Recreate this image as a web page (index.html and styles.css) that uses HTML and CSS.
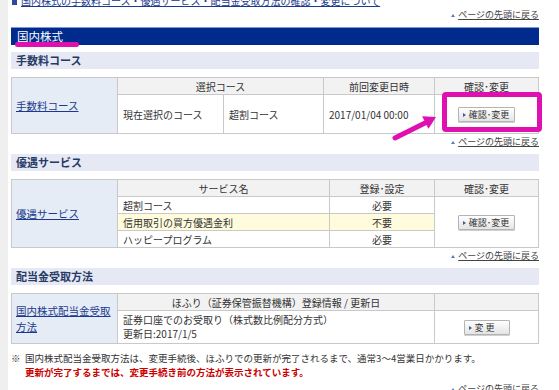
FILE: index.html
```html
<!DOCTYPE html>
<html>
  <head>
    <meta charset="utf-8">
    <link rel="stylesheet" href="styles.css">
  </head>
  <body>
    <main class="wrap">
      <div class="page">
        <p class="cut-link"><span class="sq"></span><a href="#">国内株式の手数料コース・優遇サービス・配当金受取方法の確認・変更について</a></p>
        <p class="pagetop"><a href="#"><span class="up"></span>ページの先頭に戻る</a></p>

        <h2 class="bar">国内株式</h2>

        <h3 class="sub">手数料コース</h3>
        <table class="grid">
          <colgroup>
            <col style="width:106px"><col style="width:106px"><col style="width:100px"><col style="width:111px"><col>
          </colgroup>
          <tr class="head">
            <td class="side" rowspan="2"><a href="#">手数料コース</a></td>
            <th colspan="2">選択コース</th>
            <th>前回変更日時</th>
            <th>確認･変更</th>
          </tr>
          <tr class="tall">
            <td>現在選択のコース</td>
            <td>超割コース</td>
            <td>2017/01/04 00:00</td>
            <td class="act"><button class="btn"><span class="tri"></span>確認･変更</button></td>
          </tr>
        </table>
        <p class="pagetop after"><a href="#"><span class="up"></span>ページの先頭に戻る</a></p>

        <h3 class="sub">優遇サービス</h3>
        <table class="grid">
          <colgroup>
            <col style="width:106px"><col style="width:212px"><col style="width:105px"><col>
          </colgroup>
          <tr class="head">
            <td class="side" rowspan="4"><a href="#">優遇サービス</a></td>
            <th>サービス名</th>
            <th>登録･設定</th>
            <th>確認･変更</th>
          </tr>
          <tr>
            <td>超割コース</td>
            <td class="c">必要</td>
            <td class="act" rowspan="3"><button class="btn"><span class="tri"></span>確認･変更</button></td>
          </tr>
          <tr class="hl">
            <td>信用取引の買方優遇金利</td>
            <td class="c">不要</td>
          </tr>
          <tr>
            <td>ハッピープログラム</td>
            <td class="c">必要</td>
          </tr>
        </table>
        <p class="pagetop after"><a href="#"><span class="up"></span>ページの先頭に戻る</a></p>

        <h3 class="sub">配当金受取方法</h3>
        <table class="grid">
          <colgroup>
            <col style="width:106px"><col style="width:317px"><col>
          </colgroup>
          <tr class="head">
            <td class="side" rowspan="2"><a href="#">国内株式配当金受取方法</a></td>
            <th>ほふり（証券保管振替機構）登録情報 / 更新日</th>
            <th></th>
          </tr>
          <tr class="mid">
            <td>証券口座でのお受取り（株式数比例配分方式）<br>更新日:2017/1/5</td>
            <td class="act"><button class="btn wide"><span class="tri"></span>変 更</button></td>
          </tr>
        </table>

        <p class="note"><span class="mark">※</span>国内株式配当金受取方法は、変更手続後、ほふりでの更新が完了されるまで、通常3～4営業日かかります。</p>
        <p class="warn">更新が完了するまでは、変更手続き前の方法が表示されています。</p>
        <p class="pagetop last"><a href="#"><span class="up"></span>ページの先頭に戻る</a></p>
      </div>

      <!-- annotations drawn over the page -->
      <span class="mark-line"></span>
      <span class="mark-box"></span>
      <svg class="mark-arrow" width="52" height="34" viewBox="0 0 52 34">
        <line x1="7" y1="28" x2="37" y2="13" stroke="#e010b0" stroke-width="5" stroke-linecap="round"/>
        <polygon points="48,7 40.5,18.7 34.1,6.3" fill="#e010b0"/>
      </svg>
    </main>
  </body>
</html>
```

FILE: styles.css
```css
* {
  margin: 0;
  padding: 0;
  box-sizing: border-box;
}

html, body {
  height: 100%;
  overflow: hidden;
}

body {
  font-family: "Noto Sans CJK JP", "Liberation Sans", sans-serif;
  font-size: 10px;
  color: #333;
  background: #fff;
}

a {
  color: #1c3a8c;
}

.wrap {
  position: relative;
  min-height: 100%;
  border-left: 8px solid #efefef;
  padding-left: 3px;
}

.page {
  width: 528px;
}

.cut-link {
  height: 8px;
  line-height: 0;
  font-size: 10px;
  padding-left: 1px;
  white-space: nowrap;
}

.cut-link .sq {
  display: inline-block;
  width: 5px;
  height: 5px;
  background: #2b4c9a;
  margin-right: 4px;
  vertical-align: middle;
}

.cut-link a {
  color: #1c3a8c;
}

.pagetop {
  margin-top: 2px;
  height: 10px;
  line-height: 10px;
  font-size: 9px;
  text-align: right;
}

.pagetop a {
  color: #444;
}

.pagetop .up {
  display: inline-block;
  width: 0;
  height: 0;
  border-left: 2px solid transparent;
  border-right: 2px solid transparent;
  border-bottom: 3px solid #4d7fc4;
  margin-right: 3px;
  vertical-align: 1px;
}

.pagetop.after {
  margin-top: 3px;
}

.pagetop.last {
  margin-top: 5px;
}

.bar {
  margin-top: 7px;
  height: 18px;
  line-height: 16px;
  background: #002b8c;
  border-top: 1px solid #7d98d4;
  color: #fff;
  font-size: 11.5px;
  font-weight: normal;
  padding-left: 6px;
}

.sub {
  margin-top: 7px;
  height: 17px;
  line-height: 17px;
  background: #e6e9f3;
  color: #263a66;
  font-size: 11px;
  font-weight: bold;
  padding-left: 5px;
}

.sub + .grid {
  margin-top: 8px;
}

.grid {
  width: 528px;
  border-collapse: collapse;
  table-layout: fixed;
}

.grid th,
.grid td {
  border: 1px solid #c9c9c9;
  height: 17px;
  padding: 0 5px;
  font-weight: normal;
  vertical-align: middle;
  white-space: nowrap;
}

.grid .head th {
  background: #f2f2f2;
  text-align: center;
}

.grid td.side {
  background: #e5ecf6;
  padding-left: 4px;
  white-space: normal;
  font-size: 10.5px;
  line-height: 16px;
}

.grid .tall td {
  height: 39px;
}

.grid .mid td {
  height: 33px;
  line-height: 14px;
}

.grid .hl td {
  background: #fffbdd;
}

.grid .hl td.act,
.grid td.act {
  background: #fff;
  text-align: center;
}

.grid td.c {
  text-align: center;
}

.btn {
  font-family: inherit;
  font-size: 9px;
  color: #333;
  height: 15px;
  line-height: 13px;
  padding: 0 5px 0 4px;
  border: 1px solid #b4b4b4;
  border-radius: 1px;
  background: linear-gradient(#ffffff, #e4e4e4);
  box-shadow: 0 1px 0 #d0d0d0;
}

.btn.wide {
  width: 46px;
  text-align: left;
}

.btn .tri {
  display: inline-block;
  width: 0;
  height: 0;
  border-top: 2px solid transparent;
  border-bottom: 2px solid transparent;
  border-left: 3px solid #3b5c9c;
  margin-right: 3px;
  vertical-align: 1px;
}

.note {
  margin-top: 7px;
  line-height: 14px;
  font-size: 9.5px;
  color: #333;
  white-space: nowrap;
}

.note .mark {
  display: inline-block;
  width: 14px;
}

.warn {
  line-height: 14px;
  font-size: 9.5px;
  font-weight: bold;
  color: #cc0000;
  padding-left: 14px;
}

.mark-line {
  position: absolute;
  left: 7px;
  top: 42px;
  width: 64px;
  height: 5px;
  border-radius: 3px;
  background: #e010b0;
}

.mark-box {
  position: absolute;
  left: 434px;
  top: 92px;
  width: 100px;
  height: 40px;
  border: 5px solid #e010b0;
  border-radius: 4px;
}

.mark-arrow {
  position: absolute;
  left: 380px;
  top: 110px;
}
```
